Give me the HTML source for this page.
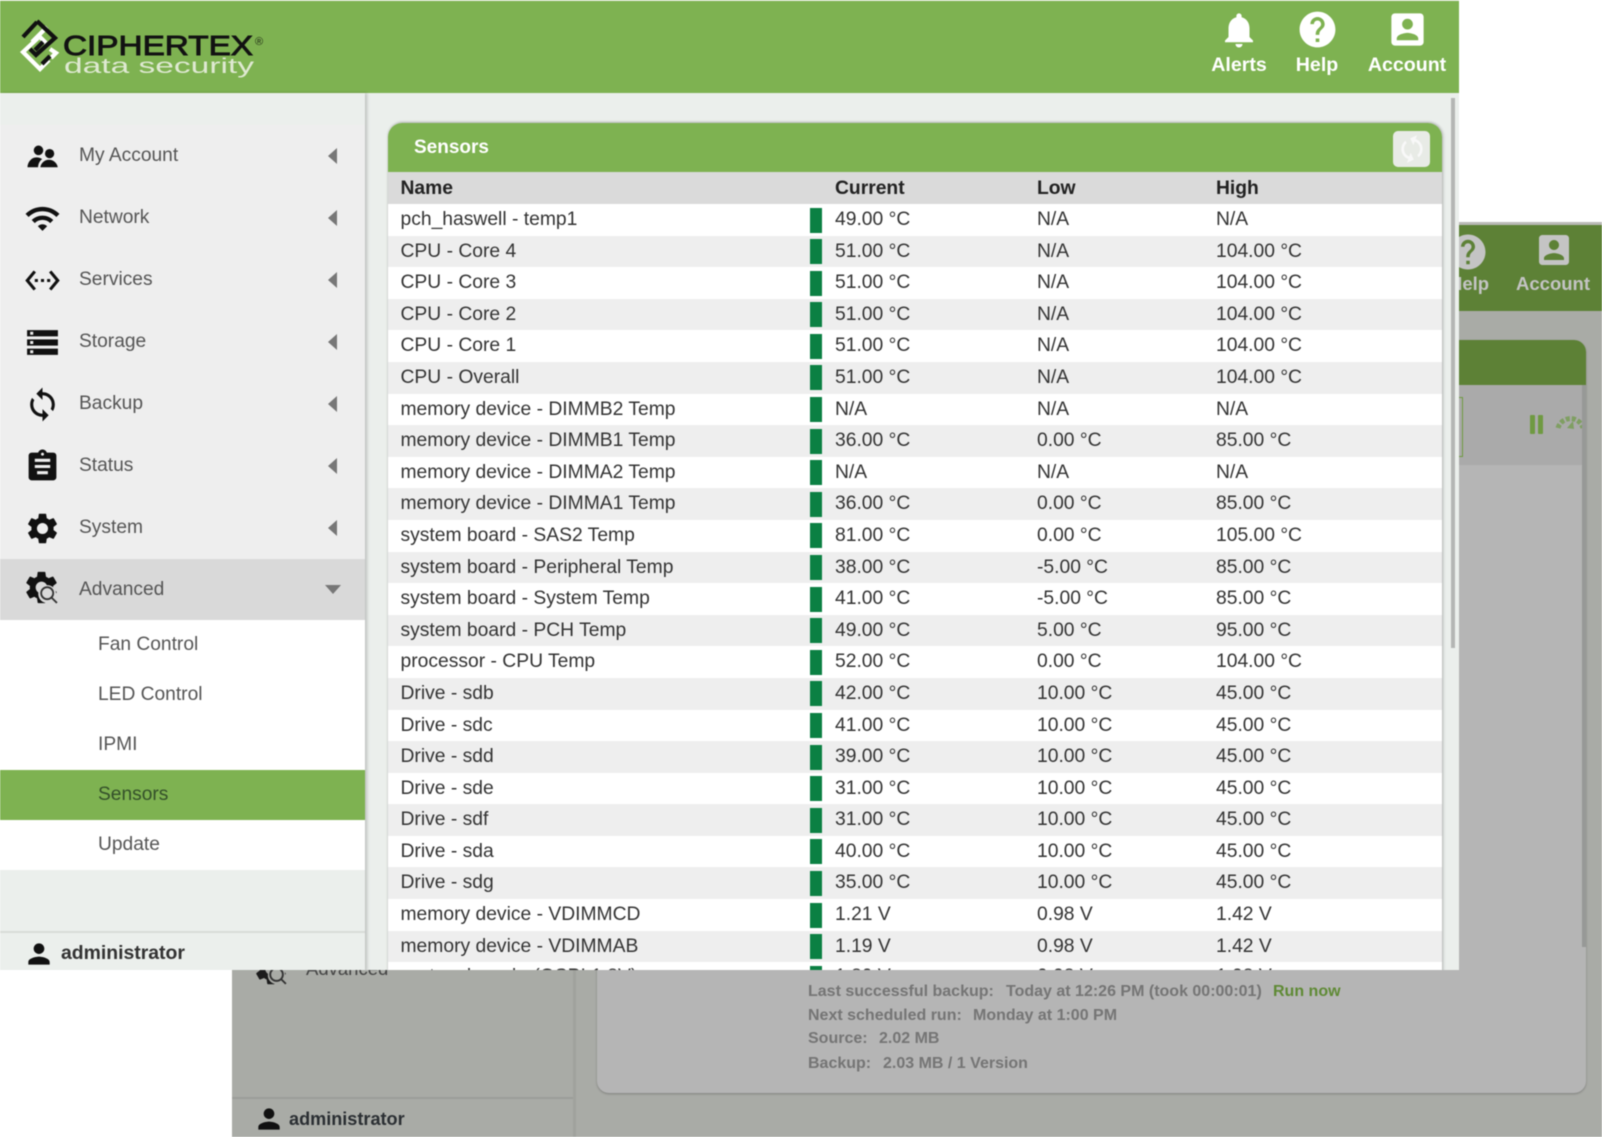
<!DOCTYPE html>
<html><head><meta charset="utf-8"><title>Ciphertex Sensors</title>
<style>
*{box-sizing:border-box}
html,body{margin:0;padding:0;background:#fff}
body{width:1602px;height:1137px;overflow:hidden;position:relative;font-family:"Liberation Sans",sans-serif}
#all{position:absolute;left:0;top:0;width:1602px;height:1137px;filter:blur(.4px);overflow:hidden}
.a{position:absolute;white-space:nowrap}
svg{position:absolute;display:block}
#back{left:232px;top:222px;width:1370px;height:915px;background:#a9aba6;border-top:3px solid #b9b9b6}
#front{left:0;top:0;width:1459px;height:970px;background:#ebefec;overflow:hidden;border-top:1px solid #dfe8d6}
#hdr{left:0;top:0;width:1459px;height:92px;background:#7eb251}
.nt{color:#fff;font-weight:bold;font-size:19.6px;transform:translateX(-50%);top:53px;line-height:22px}
#side{left:0;top:92px;width:365px;height:878px;background:#ebefec;box-shadow:2px 0 3px rgba(0,0,0,.2)}
.m{position:absolute;left:0;width:365px;height:62px;background:#eee}
.m span{position:absolute;left:79px;top:0;line-height:62px;font-size:19.2px;color:#555}
.m svg{left:23.5px;top:12.5px}
.m i{position:absolute;left:328px;top:23px;width:0;height:0;border-style:solid;border-width:8px 9px 8px 0;border-color:transparent #777 transparent transparent}
.s{position:absolute;left:0;width:365px;height:50px;background:#fff}
.s span{position:absolute;left:98px;top:0;line-height:50px;font-size:19.2px;color:#555}
#panel{left:388px;top:122px;width:1054px;height:900px;background:#fff;border-radius:14px 14px 0 0;box-shadow:1px 0 3px rgba(0,0,0,.22),0 -1px 2px rgba(0,0,0,.15);overflow:hidden}
#ph{position:absolute;left:0;top:0;width:1054px;height:49px;background:#7eb251}
#th{position:absolute;left:0;top:49px;width:1054px;height:32px;background:#dadada}
#th span{position:absolute;top:1px;line-height:32px;font-size:19.3px;font-weight:bold;color:#222}
#rows{position:absolute;left:0;top:81px;width:1054px}
.r{position:relative;height:31.6px;background:#fff}
.r:nth-child(even){background:#eee}
.r span{position:absolute;top:0;line-height:31.6px;font-size:19.3px;color:#333;white-space:nowrap}
.r span:nth-child(1){left:12.5px}
.r span:nth-child(3){left:447px}
.r span:nth-child(4){left:649px}
.r span:nth-child(5){left:828px}
.r b{position:absolute;left:422px;top:3.5px;width:12px;height:25px;background:#0b8043}
.x{color:#757575;font-weight:bold;font-size:16px;line-height:20px}
</style></head><body><div id="all">

<div class="a" id="back">
  <div class="a" style="left:0;top:0;width:1370px;height:86px;background:#5d8136"></div>
  <svg style="left:1215px;top:6px" width="42" height="42" viewBox="0 0 24 24"><path fill="#c4c4c4" d="M12 2C6.48 2 2 6.48 2 12s4.48 10 10 10 10-4.48 10-10S17.52 2 12 2zm1 17h-2v-2h2v2zm2.07-7.75l-.9.92C13.45 12.9 13 13.5 13 15h-2v-.5c0-1.1.45-2.1 1.17-2.83l1.24-1.26c.37-.36.59-.86.59-1.41 0-1.1-.9-2-2-2s-2 .9-2 2H8c0-2.21 1.79-4 4-4s4 1.79 4 4c0 .88-.36 1.68-.93 2.25z"/></svg>
  <div class="a" style="left:1217px;top:47px;font-size:18.5px;font-weight:bold;color:#c4c4c4;line-height:24px">Help</div>
  <svg style="left:1302px;top:5px" width="40" height="40" viewBox="0 0 24 24"><path fill="#c4c4c4" d="M3 5v14c0 1.1.89 2 2 2h14c1.1 0 2-.9 2-2V5c0-1.1-.9-2-2-2H5c-1.11 0-2 .9-2 2zm12 4c0 1.66-1.34 3-3 3s-3-1.34-3-3 1.34-3 3-3 3 1.34 3 3zm-9 8c0-2 4-3.1 6-3.1s6 1.1 6 3.1v1H6v-1z"/></svg>
  <div class="a" style="left:1284px;top:47px;font-size:18.5px;font-weight:bold;color:#c4c4c4;line-height:24px">Account</div>

  <div class="a" style="left:341px;top:0;width:3px;height:915px;background:#a0a29d"></div>
  <div class="a" style="left:365px;top:115px;width:989px;height:753px;background:#b5b5b5;border-radius:12px;box-shadow:0 1px 2px rgba(0,0,0,.25)"></div>
  <div class="a" style="left:365px;top:115px;width:989px;height:45px;background:#5d8136;border-radius:12px 12px 0 0"></div>
  <div class="a" style="left:365px;top:160px;width:989px;height:80px;background:#aaa"></div>
  <div class="a" style="left:1100px;top:172px;width:131px;height:60px;border:1px solid #6f9a42"></div>
  <div class="a" style="left:1298px;top:190px;width:5px;height:19px;background:#6f9a42;border-radius:1px"></div>
  <div class="a" style="left:1306px;top:190px;width:5px;height:19px;background:#6f9a42;border-radius:1px"></div>
  <svg style="left:1323px;top:188px" width="31" height="18" viewBox="0 0 31 18"><path d="M3 15A13 13 0 0 1 28 15" fill="none" stroke="#7f9f62" stroke-width="5" stroke-dasharray="4 2"/><path d="M12 15l6-7 1 8z" fill="#7f9f62"/></svg>
  <div class="a" style="left:1350px;top:160px;width:4px;height:562px;background:#979997"></div>

  <svg style="left:20px;top:725px" width="38" height="38" viewBox="0 0 24 24"><path fill="#1c1c1c" d="M19.14 12.94c.04-.3.06-.61.06-.94 0-.32-.02-.64-.07-.94l2.03-1.58c.18-.14.23-.41.12-.61l-1.92-3.32c-.12-.22-.37-.29-.59-.22l-2.39.96c-.5-.38-1.03-.7-1.62-.94l-.36-2.54c-.04-.24-.24-.41-.48-.41h-3.84c-.24 0-.43.17-.47.41l-.36 2.54c-.59.24-1.13.57-1.62.94l-2.39-.96c-.22-.08-.47 0-.59.22L2.74 8.87c-.12.21-.08.47.12.61l2.03 1.58c-.05.3-.09.63-.09.94s.02.64.07.94l-2.03 1.58c-.18.14-.23.41-.12.61l1.92 3.32c.12.22.37.29.59.22l2.39-.96c.5.38 1.03.7 1.62.94l.36 2.54c.05.24.24.41.48.41h3.84c.24 0 .44-.17.47-.41l.36-2.54c.59-.24 1.13-.56 1.62-.94l2.39.96c.22.08.47 0 .59-.22l1.92-3.32c.12-.22.07-.47-.12-.61l-2.01-1.58zM12 15.6c-1.98 0-3.6-1.62-3.6-3.6s1.62-3.6 3.6-3.6 3.6 1.62 3.6 3.6-1.62 3.6-3.6 3.6z"/><circle cx="15.5" cy="16" r="5.5" fill="#a9aba6"/><circle cx="15.5" cy="15.5" r="4" fill="none" stroke="#333" stroke-width="1.2"/><path d="M18.4 18.4l3 3" stroke="#333" stroke-width="1.2"/></svg>
  <div class="a" style="left:74px;top:732px;font-size:18.5px;color:#444;line-height:24px">Advanced</div>

  <div class="a" style="left:0;top:872px;width:341px;height:2px;background:#9c9e99"></div>
  <svg style="left:21px;top:878px" width="32" height="32" viewBox="0 0 24 24"><path fill="#111" d="M12 12c2.21 0 4-1.79 4-4s-1.79-4-4-4-4 1.79-4 4 1.79 4 4 4zm0 2c-2.67 0-8 1.34-8 4v2h16v-2c0-2.66-5.33-4-8-4z"/></svg>
  <div class="a" style="left:57px;top:882px;font-size:18.1px;font-weight:bold;color:#2b2f33;line-height:24px">administrator</div>

  <div class="a x" style="left:576px;top:757px">Last successful backup:</div>
  <div class="a x" style="left:774px;top:757px">Today at 12:26 PM (took 00:00:01)</div>
  <div class="a x" style="left:1041px;top:757px;color:#5f8a35">Run now</div>
  <div class="a x" style="left:576px;top:781px">Next scheduled run:</div>
  <div class="a x" style="left:741px;top:781px">Monday at 1:00 PM</div>
  <div class="a x" style="left:576px;top:804px">Source:</div>
  <div class="a x" style="left:647px;top:804px">2.02 MB</div>
  <div class="a x" style="left:576px;top:829px">Backup:</div>
  <div class="a x" style="left:651px;top:829px">2.03 MB / 1 Version</div>
</div>

<div class="a" id="front">
  <div class="a" id="hdr">
    <svg style="left:0;top:0" width="280" height="92" viewBox="0 0 280 92">
      <g fill="none" stroke-width="4.2" stroke-linecap="butt" stroke-linejoin="miter" transform="translate(-1 -1)">
        <path stroke="#fff" d="M39 38L24 52L41 69L50 60M48 27L33 42M41 37L47 43M51 49L57 53L52 58"/>
        <path stroke="#111" d="M24 37L38 22M38 21L56 38L37 55L31 49M43 64L51 56M44 42L36 50"/>
      </g>
      <text x="63" y="54" font-family="Liberation Sans" font-size="28" fill="#121212" stroke="#121212" stroke-width=".9" textLength="190" lengthAdjust="spacingAndGlyphs">CIPHERTEX</text>
      <text x="255" y="44" font-family="Liberation Sans" font-size="11" fill="#1e2a14">®</text>
      <text x="64" y="72" font-family="Liberation Sans" font-size="21" fill="#dfe9d2" textLength="190" lengthAdjust="spacingAndGlyphs">data security</text>
    </svg>
    <svg style="left:1218px;top:8px" width="42" height="42" viewBox="0 0 24 24"><path fill="#fff" d="M12 22c1.1 0 2-.9 2-2h-4c0 1.1.9 2 2 2zm6-6v-5c0-3.07-1.63-5.64-4.5-6.32V4c0-.83-.67-1.5-1.5-1.5s-1.5.67-1.5 1.5v.68C7.64 5.36 6 7.92 6 11v5l-2 2v1h16v-1l-2-2z"/></svg>
    <div class="a nt" style="left:1239px">Alerts</div>
    <svg style="left:1295.5px;top:7px" width="43" height="43" viewBox="0 0 24 24"><path fill="#fff" d="M12 2C6.48 2 2 6.48 2 12s4.48 10 10 10 10-4.48 10-10S17.52 2 12 2zm1 17h-2v-2h2v2zm2.07-7.75l-.9.92C13.45 12.9 13 13.5 13 15h-2v-.5c0-1.1.45-2.1 1.17-2.83l1.24-1.26c.37-.36.59-.86.59-1.41 0-1.1-.9-2-2-2s-2 .9-2 2H8c0-2.21 1.79-4 4-4s4 1.79 4 4c0 .88-.36 1.68-.93 2.25z"/></svg>
    <div class="a nt" style="left:1317px">Help</div>
    <svg style="left:1385.5px;top:7px" width="43" height="43" viewBox="0 0 24 24"><path fill="#fff" d="M3 5v14c0 1.1.89 2 2 2h14c1.1 0 2-.9 2-2V5c0-1.1-.9-2-2-2H5c-1.11 0-2 .9-2 2zm12 4c0 1.66-1.34 3-3 3s-3-1.34-3-3 1.34-3 3-3 3 1.34 3 3zm-9 8c0-2 4-3.1 6-3.1s6 1.1 6 3.1v1H6v-1z"/></svg>
    <div class="a nt" style="left:1407px">Account</div>
  </div>

  <div class="a" style="left:1451px;top:97px;width:4px;height:550px;background:#b4b6b4"></div>

  <div class="a" id="panel">
    <div id="ph">
      <div class="a" style="left:26px;top:0;line-height:50px;font-size:19px;font-weight:bold;color:#fff">Sensors</div>
      <div class="a" style="left:1005px;top:8px;width:37px;height:36px;background:#e8ebe6;border-radius:5px"></div>
      <svg style="left:1008px;top:10px" width="32" height="32" viewBox="0 0 24 24"><path fill="#f8f8f8" d="M12 4V1L8 5l4 4V6c3.31 0 6 2.69 6 6 0 1.01-.25 1.97-.7 2.8l1.46 1.46C19.54 15.03 20 13.57 20 12c0-4.42-3.58-8-8-8zm0 14c-3.31 0-6-2.69-6-6 0-1.01.25-1.97.7-2.8L5.24 7.74C4.46 8.97 4 10.43 4 12c0 4.42 3.58 8 8 8v3l4-4-4-4v3z" transform="rotate(20 12 12)"/></svg>
    </div>
    <div id="th">
      <span style="left:12.5px">Name</span><span style="left:447px">Current</span><span style="left:649px">Low</span><span style="left:828px">High</span>
    </div>
    <div id="rows">
      <div class="r"><span>pch_haswell - temp1</span><b></b><span>49.00 °C</span><span>N/A</span><span>N/A</span></div>
      <div class="r"><span>CPU - Core 4</span><b></b><span>51.00 °C</span><span>N/A</span><span>104.00 °C</span></div>
      <div class="r"><span>CPU - Core 3</span><b></b><span>51.00 °C</span><span>N/A</span><span>104.00 °C</span></div>
      <div class="r"><span>CPU - Core 2</span><b></b><span>51.00 °C</span><span>N/A</span><span>104.00 °C</span></div>
      <div class="r"><span>CPU - Core 1</span><b></b><span>51.00 °C</span><span>N/A</span><span>104.00 °C</span></div>
      <div class="r"><span>CPU - Overall</span><b></b><span>51.00 °C</span><span>N/A</span><span>104.00 °C</span></div>
      <div class="r"><span>memory device - DIMMB2 Temp</span><b></b><span>N/A</span><span>N/A</span><span>N/A</span></div>
      <div class="r"><span>memory device - DIMMB1 Temp</span><b></b><span>36.00 °C</span><span>0.00 °C</span><span>85.00 °C</span></div>
      <div class="r"><span>memory device - DIMMA2 Temp</span><b></b><span>N/A</span><span>N/A</span><span>N/A</span></div>
      <div class="r"><span>memory device - DIMMA1 Temp</span><b></b><span>36.00 °C</span><span>0.00 °C</span><span>85.00 °C</span></div>
      <div class="r"><span>system board - SAS2 Temp</span><b></b><span>81.00 °C</span><span>0.00 °C</span><span>105.00 °C</span></div>
      <div class="r"><span>system board - Peripheral Temp</span><b></b><span>38.00 °C</span><span>-5.00 °C</span><span>85.00 °C</span></div>
      <div class="r"><span>system board - System Temp</span><b></b><span>41.00 °C</span><span>-5.00 °C</span><span>85.00 °C</span></div>
      <div class="r"><span>system board - PCH Temp</span><b></b><span>49.00 °C</span><span>5.00 °C</span><span>95.00 °C</span></div>
      <div class="r"><span>processor - CPU Temp</span><b></b><span>52.00 °C</span><span>0.00 °C</span><span>104.00 °C</span></div>
      <div class="r"><span>Drive - sdb</span><b></b><span>42.00 °C</span><span>10.00 °C</span><span>45.00 °C</span></div>
      <div class="r"><span>Drive - sdc</span><b></b><span>41.00 °C</span><span>10.00 °C</span><span>45.00 °C</span></div>
      <div class="r"><span>Drive - sdd</span><b></b><span>39.00 °C</span><span>10.00 °C</span><span>45.00 °C</span></div>
      <div class="r"><span>Drive - sde</span><b></b><span>31.00 °C</span><span>10.00 °C</span><span>45.00 °C</span></div>
      <div class="r"><span>Drive - sdf</span><b></b><span>31.00 °C</span><span>10.00 °C</span><span>45.00 °C</span></div>
      <div class="r"><span>Drive - sda</span><b></b><span>40.00 °C</span><span>10.00 °C</span><span>45.00 °C</span></div>
      <div class="r"><span>Drive - sdg</span><b></b><span>35.00 °C</span><span>10.00 °C</span><span>45.00 °C</span></div>
      <div class="r"><span>memory device - VDIMMCD</span><b></b><span>1.21 V</span><span>0.98 V</span><span>1.42 V</span></div>
      <div class="r"><span>memory device - VDIMMAB</span><b></b><span>1.19 V</span><span>0.98 V</span><span>1.42 V</span></div>
      <div class="r"><span style="top:-1px">system board - (QSPI 1.8V)</span><b></b><span style="top:-1px">1.80 V</span><span style="top:-1px">0.98 V</span><span style="top:-1px">1.98 V</span></div>
    </div>
  </div>

  <div class="a" id="side">
    <div class="m" style="top:32px"><svg width="37" height="37" viewBox="0 0 24 24"><circle cx="9.400" cy="8" r="3.100" fill="#111"/><circle cx="16.600" cy="10.100" r="3" fill="#111"/><path fill="#111" d="M2.300 19c0-2.800 2.200-6.400 5.800-6.400 1.500 0 2.700.4 3.700 1.100-1.500 1-2.500 2.800-2.700 5.300zM10.600 19c.3-2.500 2.500-4.900 5.600-4.900 3.100 0 5.400 2.400 5.700 4.900z"/></svg><span>My Account</span><i></i></div>
    <div class="m" style="top:94px"><svg width="37" height="37" viewBox="0 0 24 24"><path fill="#111" d="M1 9l2 2c4.970-4.970 13.030-4.970 18 0l2-2C16.930 2.930 7.080 2.930 1 9zm8 8l3 3 3-3c-1.650-1.660-4.340-1.660-6 0zm-4-4l2 2c2.760-2.760 7.240-2.760 10 0l2-2C15.140 9.140 8.870 9.140 5 13z"/></svg><span>Network</span><i></i></div>
    <div class="m" style="top:156px"><svg width="37" height="37" viewBox="0 0 24 24"><path fill="#111" d="M7.770 6.760L6.230 5.480.82 12l5.410 6.520 1.540-1.280L3.420 12l4.350-5.240zM7 13h2v-2H7v2zm10-2h-2v2h2v-2zm-6 2h2v-2h-2v2zm6.770-7.520l-1.540 1.280L20.580 12l-4.350 5.240 1.540 1.280L23.180 12l-5.410-6.520z"/></svg><span>Services</span><i></i></div>
    <div class="m" style="top:218px"><svg width="37" height="37" viewBox="0 0 24 24"><path fill="#111" d="M2 20h20v-4H2v4zm2-3h2v2H4v-2zM2 4v4h20V4H2zm4 3H4V5h2v2zm-4 7h20v-4H2v4zm2-3h2v2H4v-2z"/></svg><span>Storage</span><i></i></div>
    <div class="m" style="top:280px"><svg width="37" height="37" viewBox="0 0 24 24"><path fill="#111" d="M12 4V1L8 5l4 4V6c3.310 0 6 2.690 6 6 0 1.010-.250 1.970-.700 2.800l1.460 1.460C19.540 15.030 20 13.570 20 12c0-4.420-3.580-8-8-8zm0 14c-3.310 0-6-2.690-6-6 0-1.010.250-1.970.700-2.800L5.240 7.740C4.460 8.970 4 10.430 4 12c0 4.420 3.580 8 8 8v3l4-4-4-4v3z"/></svg><span>Backup</span><i></i></div>
    <div class="m" style="top:342px"><svg width="37" height="37" viewBox="0 0 24 24"><path fill="#111" d="M19 3h-4.180C14.400 1.840 13.300 1 12 1c-1.300 0-2.400.840-2.820 2H5c-1.100 0-2 .900-2 2v14c0 1.100.900 2 2 2h14c1.100 0 2-.900 2-2V5c0-1.100-.900-2-2-2zm-7 0c.550 0 1 .450 1 1s-.450 1-1 1-1-.450-1-1 .450-1 1-1zm3.500 14h-7v-2h7v2zm1.500-4H7v-2h10v2zm0-4H7V7h10v2z"/></svg><span>Status</span><i></i></div>
    <div class="m" style="top:404px"><svg width="37" height="37" viewBox="0 0 24 24"><path fill="#111" d="M19.140 12.940c.040-.300.060-.610.060-.940 0-.320-.020-.640-.070-.940l2.030-1.580c.180-.140.230-.410.120-.610l-1.920-3.320c-.120-.220-.370-.290-.590-.220l-2.390.960c-.500-.380-1.030-.700-1.620-.940l-.360-2.540c-.040-.240-.240-.410-.480-.410h-3.840c-.240 0-.430.170-.470.410l-.360 2.540c-.590.240-1.130.570-1.620.940l-2.390-.960c-.220-.080-.470 0-.590.220L2.740 8.870c-.120.210-.080.470.120.610l2.030 1.580c-.050.300-.090.630-.090.940s.020.640.070.940l-2.030 1.580c-.180.140-.230.410-.120.610l1.920 3.320c.120.220.370.290.590.220l2.390-.960c.500.380 1.030.700 1.620.940l.360 2.540c.050.240.240.410.480.410h3.840c.240 0 .440-.170.470-.410l.360-2.540c.590-.240 1.130-.560 1.620-.940l2.390.960c.220.080.470 0 .590-.220l1.920-3.320c.120-.220.070-.470-.12-.610l-2.010-1.580zM12 15.600c-1.980 0-3.600-1.620-3.600-3.600s1.620-3.600 3.600-3.600 3.600 1.620 3.600 3.600-1.620 3.600-3.600 3.600z"/></svg><span>System</span><i></i></div>
    <div class="m" style="top:466px;background:#d9d9d9"><svg width="39" height="39" style="left:22px;top:9px" viewBox="0 0 24 24"><path fill="#111" d="M19.140 12.940c.040-.300.060-.610.060-.940 0-.320-.020-.640-.070-.940l2.030-1.580c.180-.140.230-.410.120-.610l-1.920-3.320c-.120-.220-.370-.290-.590-.220l-2.390.960c-.500-.380-1.030-.700-1.620-.940l-.360-2.540c-.040-.240-.240-.410-.480-.410h-3.840c-.240 0-.430.170-.470.410l-.360 2.540c-.590.240-1.130.570-1.620.940l-2.390-.960c-.220-.080-.470 0-.590.220L2.740 8.870c-.120.210-.080.470.120.610l2.030 1.580c-.050.300-.090.630-.090.940s.020.640.07.940l-2.030 1.580c-.180.140-.23.410-.12.610l1.920 3.320c.12.22.37.29.59.22l2.39-.96c.5.38 1.03.7 1.62.94l.36 2.54c.05.24.24.41.48.41h3.840c.24 0 .44-.17.47-.41l.36-2.54c.59-.24 1.13-.56 1.62-.94l2.39.96c.22.08.47 0 .59-.22l1.92-3.32c.12-.22.07-.47-.12-.61l-2.01-1.58zM12 15.6c-1.98 0-3.6-1.62-3.6-3.6s1.62-3.6 3.6-3.6 3.6 1.62 3.6 3.6-1.62 3.6-3.6 3.6z"/><circle cx="15.5" cy="16" r="5.5" fill="#d9d9d9"/><circle cx="15.5" cy="15.5" r="3.7" fill="none" stroke="#333" stroke-width="1.1"/><path d="M18.2 18.2l3.3 3.3" stroke="#333" stroke-width="1.1"/></svg><span>Advanced</span><i style="left:325px;top:26px;border-width:9px 8px 0 8px;border-color:#777 transparent transparent transparent"></i></div>
    <div class="s" style="top:527px"><span>Fan Control</span></div>
    <div class="s" style="top:577px"><span>LED Control</span></div>
    <div class="s" style="top:627px"><span>IPMI</span></div>
    <div class="s" style="top:677px;background:#7eb251"><span style="color:#34502a">Sensors</span></div>
    <div class="s" style="top:727px"><span>Update</span></div>
    <div class="a" style="left:0;top:838px;width:365px;height:2px;background:#d9dcd8"></div>
    <svg style="left:23px;top:845px" width="32" height="32" viewBox="0 0 24 24"><path fill="#111" d="M12 12c2.210 0 4-1.790 4-4s-1.790-4-4-4-4 1.790-4 4 1.790 4 4 4zm0 2c-2.670 0-8 1.340-8 4v2h16v-2c0-2.660-5.330-4-8-4z"/></svg>
    <div class="a" style="left:61px;top:848px;font-size:19.4px;font-weight:bold;color:#333;line-height:24px">administrator</div>
  </div>
</div>

</div></body></html>
